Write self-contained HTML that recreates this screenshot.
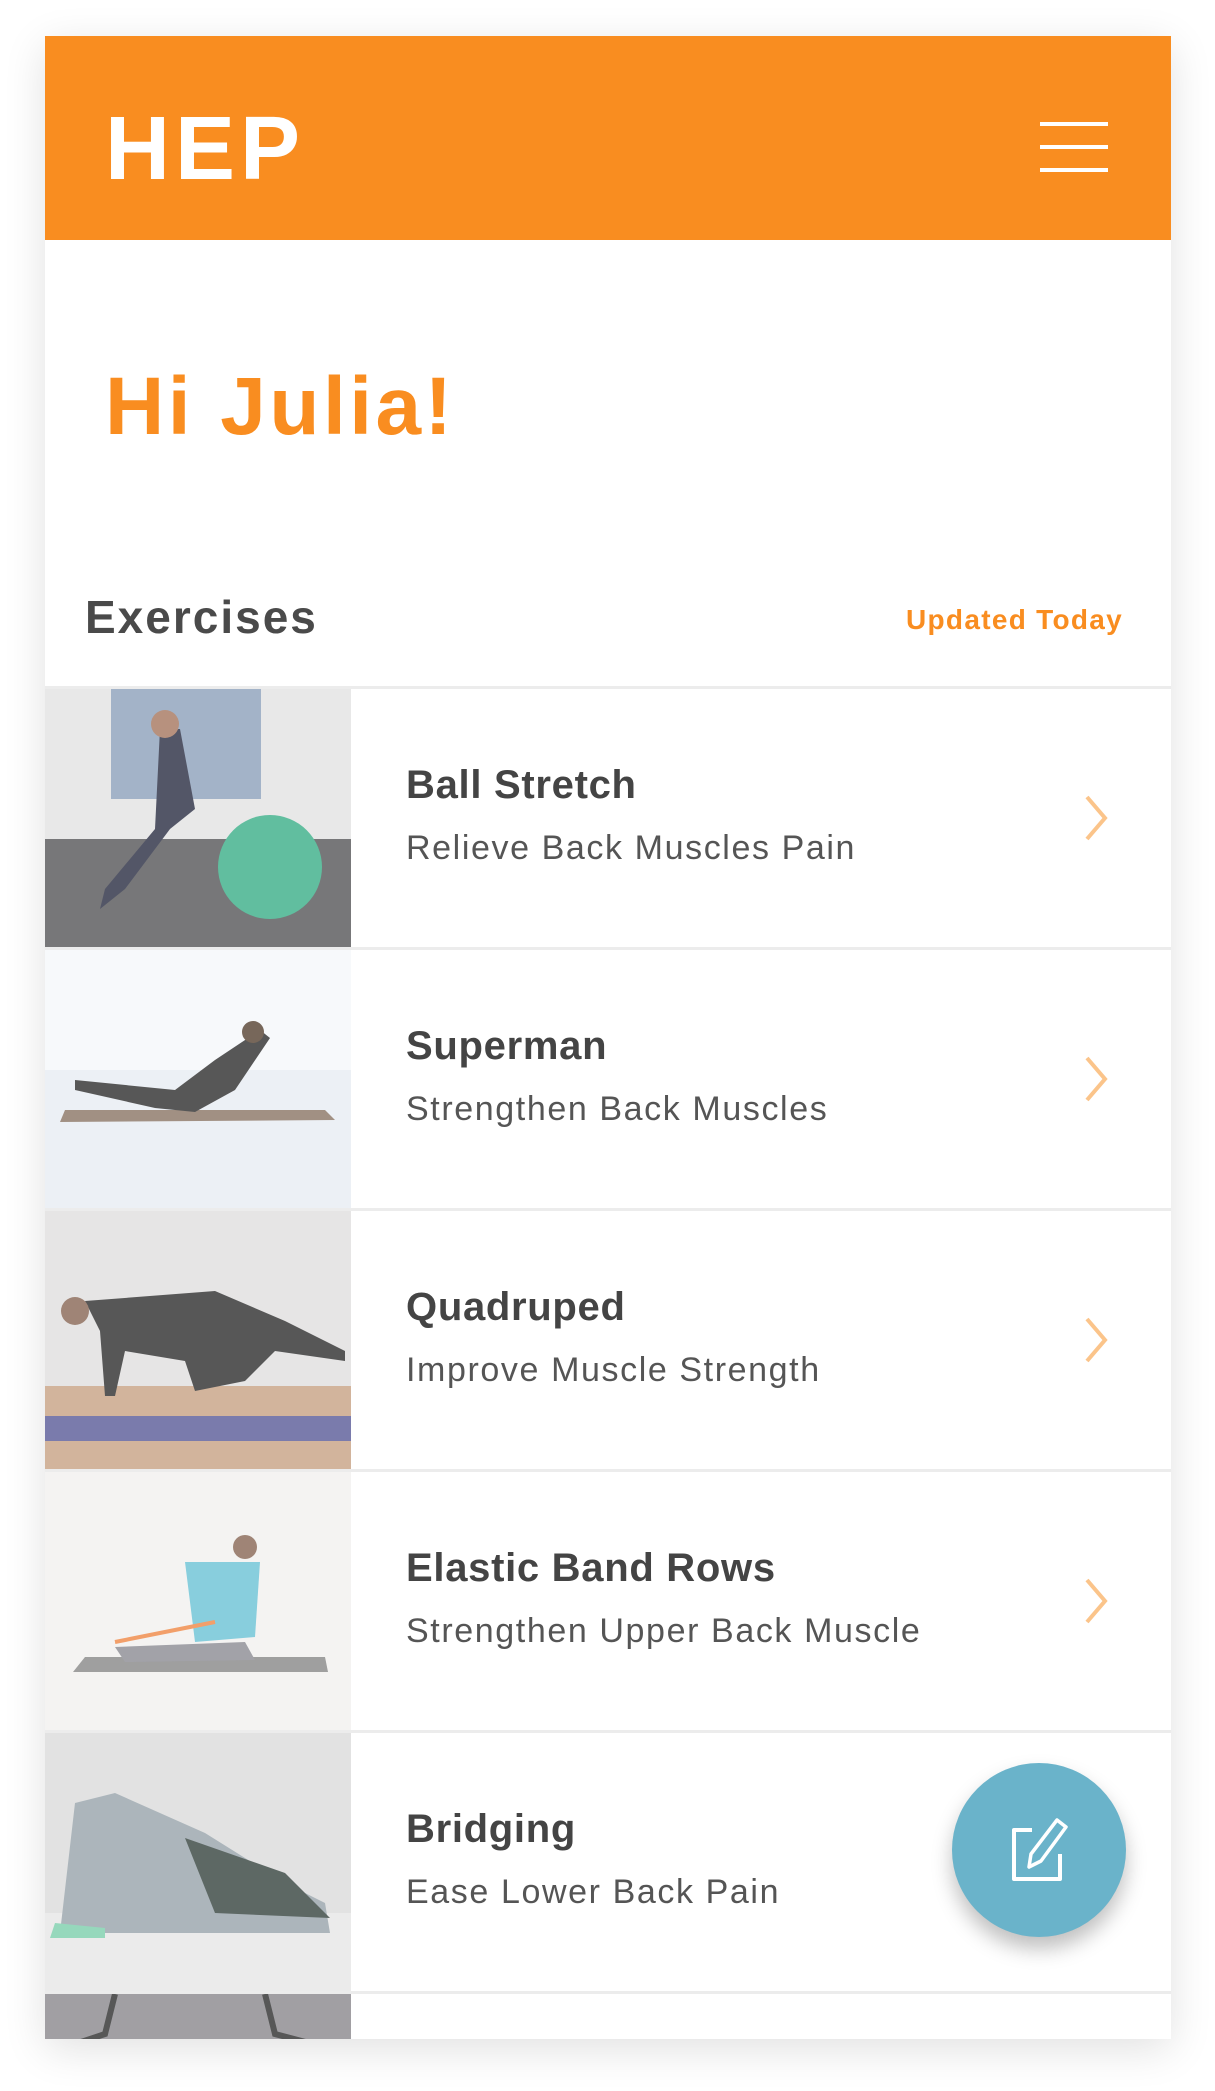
<!DOCTYPE html>
<html><head><meta charset="utf-8">
<style>
*{margin:0;padding:0;box-sizing:border-box}
html,body{width:1215px;height:2091px;background:#fff;overflow:hidden;font-family:"Liberation Sans",sans-serif}
.card{position:absolute;left:45px;top:36px;width:1126px;height:2003px;background:#fff;box-shadow:0 10px 40px rgba(0,0,0,.12);overflow:hidden}
.hdr{position:absolute;left:0;top:0;width:1126px;height:204px;background:#f98d20}
.logo{position:absolute;left:60px;top:68px;font-weight:bold;font-size:90px;color:#fff;letter-spacing:5px;line-height:1}
.ham{position:absolute;left:995px;width:68px;height:4px;background:#fff}
.hi{position:absolute;left:60px;top:330px;font-weight:bold;font-size:82px;color:#f98d20;line-height:1;letter-spacing:3.5px}
.ex{position:absolute;left:40px;top:558px;font-weight:bold;font-size:46px;color:#4a4a4a;letter-spacing:2px;line-height:1}
.up{position:absolute;left:861px;top:570px;font-weight:bold;font-size:28px;color:#f98d20;line-height:1;letter-spacing:1.3px}
.row{position:absolute;left:0;width:1126px;height:261px;border-top:3px solid #ececec;background:#fff}
.img{position:absolute;left:0;top:0;width:306px;height:258px;overflow:hidden;opacity:.82}
.t{position:absolute;left:361px;top:76px;font-weight:bold;font-size:40px;color:#444;line-height:1;letter-spacing:.7px}
.s{position:absolute;left:361px;top:142px;font-size:34px;color:#555;line-height:1;letter-spacing:1.6px}
.chev{position:absolute;left:1036px;top:104px}
.fab{position:absolute;left:907px;top:1727px;width:174px;height:174px;border-radius:50%;background:#6ab3ca;box-shadow:0 12px 20px rgba(0,0,0,.25)}
</style></head><body>
<div class="card">
<div class="hdr">
<div class="logo">HEP</div>
<div class="ham" style="top:86px"></div><div class="ham" style="top:109px"></div><div class="ham" style="top:132px"></div>
</div>
<div class="hi">Hi Julia!</div>
<div class="ex">Exercises</div>
<div class="up">Updated Today</div>

<div class="row" style="top:650px"><div class="img">
<svg width="306" height="258"><rect width="306" height="258" fill="#e4e4e4"/><rect y="150" width="306" height="108" fill="#5a5a5c"/><rect x="66" y="0" width="150" height="110" fill="#8fa3bd"/><circle cx="225" cy="178" r="52" fill="#3fb08b"/><path d="M115 40 L135 40 L150 120 L125 140 L80 200 L55 220 L60 200 L110 140 Z" fill="#2e3146"/><circle cx="120" cy="35" r="14" fill="#a87a62"/></svg></div>
<div class="t">Ball Stretch</div><div class="s">Relieve Back Muscles Pain</div>
<svg class="chev" width="30" height="50"><path d="M6 4 L24 25 L6 46" fill="none" stroke="#fbc48a" stroke-width="4"/></svg></div>

<div class="row" style="top:911px"><div class="img">
<svg width="306" height="258"><rect width="306" height="258" fill="#e9edf3"/><rect width="306" height="120" fill="#f6f8fb"/><path d="M20 160 L280 160 L290 170 L15 172 Z" fill="#8d7868"/><path d="M30 130 L130 140 L170 110 L215 80 L225 88 L190 140 L150 162 L110 158 L30 140 Z" fill="#333"/><circle cx="208" cy="82" r="11" fill="#5a4636"/></svg></div>
<div class="t">Superman</div><div class="s">Strengthen Back Muscles</div>
<svg class="chev" width="30" height="50"><path d="M6 4 L24 25 L6 46" fill="none" stroke="#fbc48a" stroke-width="4"/></svg></div>

<div class="row" style="top:1172px"><div class="img">
<svg width="306" height="258"><rect width="306" height="258" fill="#e1e0e0"/><rect y="175" width="306" height="83" fill="#c9a487"/><rect y="205" width="306" height="25" fill="#5d5f9a"/><path d="M40 90 L170 80 L240 110 L300 140 L300 150 L230 140 L200 170 L150 180 L140 150 L80 140 L70 185 L60 185 L55 120 Z" fill="#333"/><circle cx="30" cy="100" r="14" fill="#8a6a58"/></svg></div>
<div class="t">Quadruped</div><div class="s">Improve Muscle Strength</div>
<svg class="chev" width="30" height="50"><path d="M6 4 L24 25 L6 46" fill="none" stroke="#fbc48a" stroke-width="4"/></svg></div>

<div class="row" style="top:1433px"><div class="img">
<svg width="306" height="258"><rect width="306" height="258" fill="#f2f1f0"/><path d="M40 185 L280 185 L283 200 L28 200 Z" fill="#8a8a8a"/><path d="M140 90 L215 90 L210 165 L150 170 Z" fill="#6fc4d6"/><path d="M70 175 L200 170 L210 188 L80 190 Z" fill="#8e8e96"/><circle cx="200" cy="75" r="12" fill="#8a6a58"/><path d="M70 170 L170 150" stroke="#f08a4a" stroke-width="4"/></svg></div>
<div class="t">Elastic Band Rows</div><div class="s">Strengthen Upper Back Muscle</div>
<svg class="chev" width="30" height="50"><path d="M6 4 L24 25 L6 46" fill="none" stroke="#fbc48a" stroke-width="4"/></svg></div>

<div class="row" style="top:1694px"><div class="img">
<svg width="306" height="258"><rect width="306" height="258" fill="#dcdcdc"/><rect y="180" width="306" height="78" fill="#e7e7e7"/><path d="M15 200 L30 70 L70 60 L160 100 L240 150 L280 170 L285 200 L120 200 L60 200 Z" fill="#9aa6ad"/><path d="M140 105 L240 140 L285 185 L170 180 Z" fill="#3a4743"/><path d="M10 190 L60 195 L60 205 L5 205 Z" fill="#7fd0ae"/></svg></div>
<div class="t">Bridging</div><div class="s">Ease Lower Back Pain</div></div>

<div class="row" style="top:1955px;height:48px"><div class="img" style="height:48px">
<svg width="306" height="48"><rect width="306" height="48" fill="#8d8b90"/><path d="M70 0 L60 40 L0 60 M220 0 L230 40 L306 60" stroke="#333" stroke-width="6" fill="none"/></svg></div></div>

<div class="fab"><svg width="174" height="174"><path d="M80 67 L62 67 L62 116 L108 116 L108 91" fill="none" stroke="#fff" stroke-width="4" stroke-linejoin="round"/><path d="M105 57 L114 64 L89 98 L77 104 L79 91 Z" fill="none" stroke="#fff" stroke-width="3.5" stroke-linejoin="round"/></svg></div>
</div>
</body></html>
